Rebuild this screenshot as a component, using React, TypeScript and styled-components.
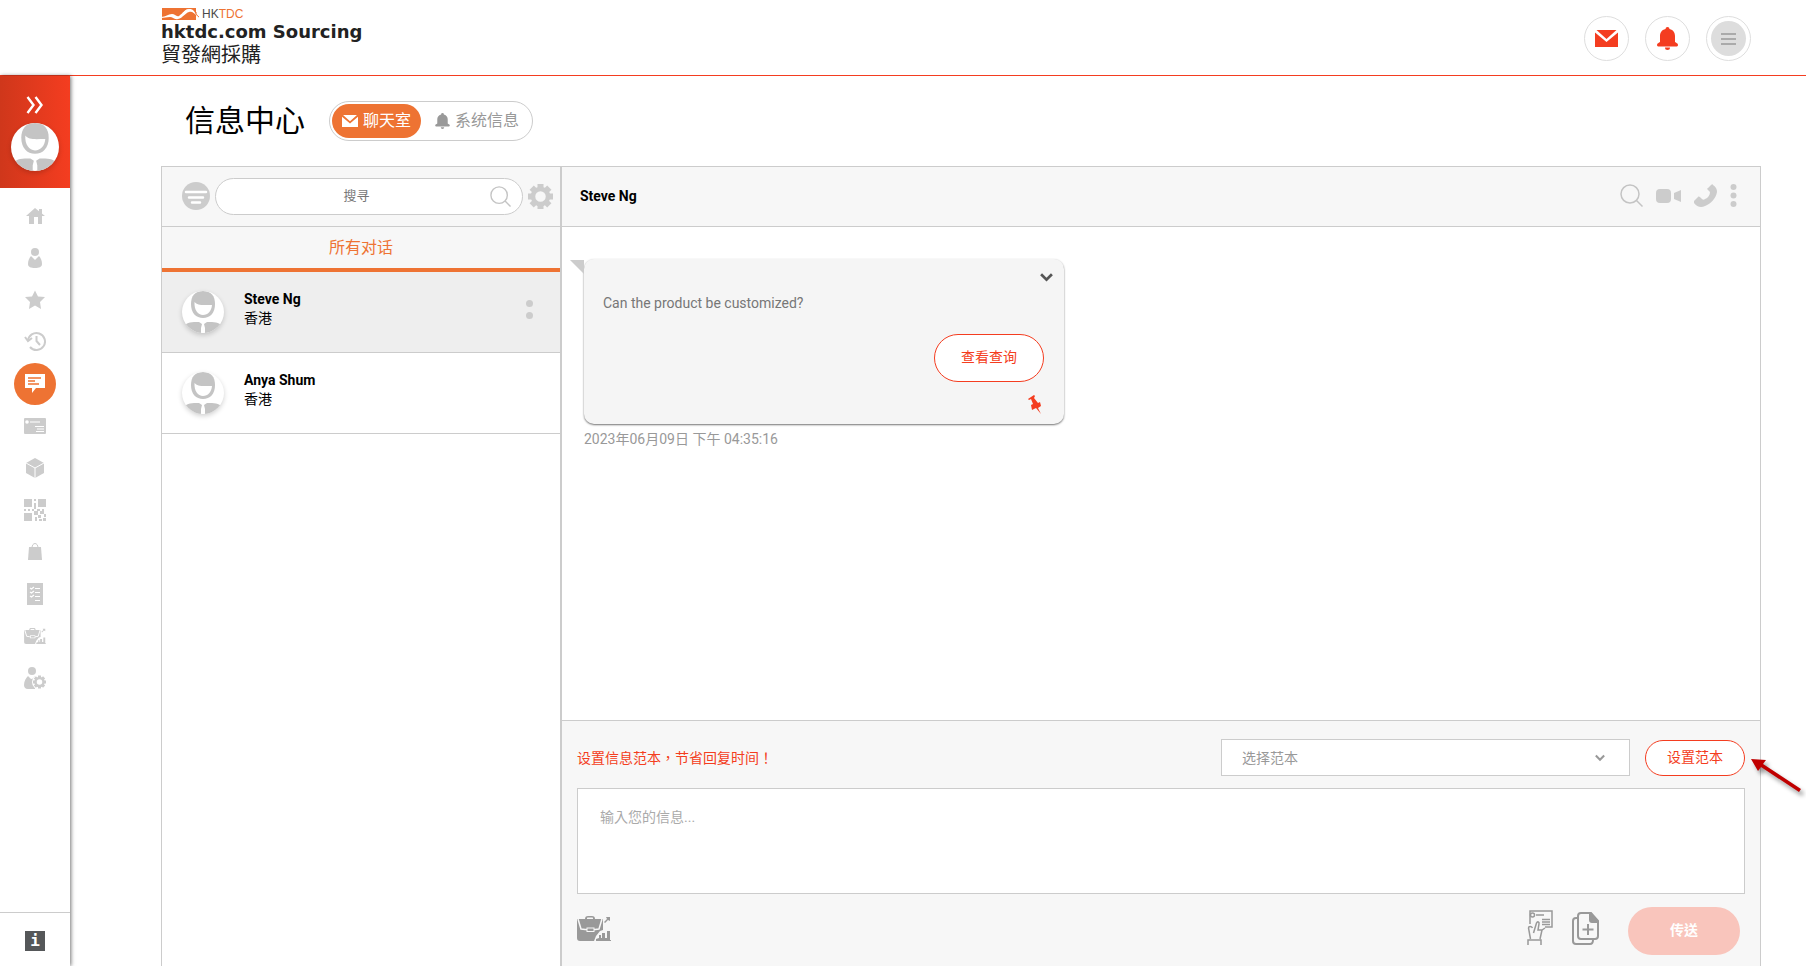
import React from 'react';
import styled, { createGlobalStyle } from 'styled-components';

const color = {
  brand: '#f43d20',
  orange: '#ee7333',
  line: '#cccccc',
  icon: '#cccccc',
  muted: '#999999',
  surface: '#f7f7f7',
};

const GlobalStyle = createGlobalStyle`
  *, *::before, *::after { box-sizing: border-box; }
  body {
    margin: 0;
    background: #fff;
    color: #000;
    font-family: Roboto, "Noto Sans CJK TC", sans-serif;
    font-size: 14px;
    line-height: 20px;
  }
  button, input, select, textarea { font: inherit; }
  svg { display: block; flex: none; }
`;

const Page = styled.div`
  display: flex;
  flex-direction: column;
  min-height: 100vh;
`;

/* ---------- header ---------- */

const Header = styled.header`
  display: flex;
  justify-content: space-between;
  align-items: center;
  height: 76px;
  padding: 0 55px 0 161px;
  border-bottom: 1px solid ${color.brand};
`;

const Brand = styled.a`
  display: flex;
  flex-direction: column;
  margin-bottom: 4px;
  color: #222;
  text-decoration: none;
`;

const BrandMark = styled.span`
  display: flex;
  align-items: center;
  gap: 3px;
  height: 14px;
  color: #4a4a4a;
  font: 12px/14px "Liberation Sans", sans-serif;
`;

const BrandAccent = styled.span`
  color: ${color.orange};
`;

const BrandName = styled.span`
  font: bold 18px/22px "DejaVu Sans", sans-serif;
`;

const BrandLocal = styled.span`
  font: 20px/22px "Noto Sans CJK TC", sans-serif;
`;

const HeaderActions = styled.div`
  display: flex;
  gap: 16px;
  margin-top: 2px;
`;

const RoundButton = styled.button`
  display: flex;
  align-items: center;
  justify-content: center;
  width: 45px;
  height: 45px;
  padding: 0;
  border: 1px solid #dedede;
  border-radius: 50%;
  background: #fff;
  color: ${color.brand};
`;

const MenuDisc = styled.span`
  display: flex;
  align-items: center;
  justify-content: center;
  width: 35px;
  height: 35px;
  border-radius: 50%;
  background: #dddddd;
`;

/* ---------- sidebar ---------- */

const Body = styled.div`
  display: flex;
  flex: 1;
`;

const Sidebar = styled.aside`
  display: flex;
  flex-direction: column;
  flex: none;
  width: 70px;
  background: #fff;
  box-shadow: 1px 0 4px rgba(0, 0, 0, 0.55);
`;

const Profile = styled.div`
  display: flex;
  flex-direction: column;
  align-items: center;
  gap: 9px;
  height: 112px;
  padding-top: 20px;
  background: linear-gradient(90deg, #cf371b, #f43d20);
`;

const PlainButton = styled.button`
  display: flex;
  align-items: center;
  justify-content: center;
  padding: 0;
  border: 0;
  background: none;
  color: inherit;
`;

const SideNav = styled.nav`
  display: flex;
  flex-direction: column;
  align-items: center;
  flex: 1;
  padding-top: 7px;
`;

const SideLink = styled.a<{ $active?: boolean }>`
  display: flex;
  align-items: center;
  justify-content: center;
  width: 42px;
  height: 42px;
  border-radius: 50%;
  color: ${(p) => (p.$active ? '#fff' : color.icon)};
  background: ${(p) => (p.$active ? color.orange : 'none')};
`;

const SideFooter = styled.div`
  display: flex;
  justify-content: center;
  height: 54px;
  padding-top: 18px;
  border-top: 1px solid ${color.line};
`;

const InfoLink = styled.a`
  width: 20px;
  height: 20px;
  background: #555759;
  color: #fff;
  text-align: center;
  text-decoration: none;
  font: bold 16px/20px "DejaVu Sans Mono", monospace;
`;

/* ---------- main ---------- */

const Main = styled.main`
  display: flex;
  flex-direction: column;
  flex: 1;
  min-width: 0;
  padding: 25px 45px 0 91px;
`;

const TitleBar = styled.div`
  display: flex;
  align-items: center;
  gap: 24px;
  height: 40px;
  margin-bottom: 25px;
  padding-left: 24px;
`;

const Title = styled.h1`
  margin: 0;
  font-size: 30px;
  line-height: 40px;
  font-weight: 400;
`;

const Switcher = styled.div`
  display: flex;
  align-items: center;
  gap: 14px;
  height: 40px;
  padding: 0 13px 0 2px;
  border: 1px solid ${color.line};
  border-radius: 20px;
`;

const SwitchButton = styled.button<{ $active?: boolean }>`
  display: flex;
  align-items: center;
  gap: 5px;
  height: 34px;
  padding: 0 ${(p) => (p.$active ? '10px' : '0')};
  border: 0;
  border-radius: 17px;
  background: ${(p) => (p.$active ? color.orange : 'none')};
  color: ${(p) => (p.$active ? '#fff' : color.muted)};
  font-size: 16px;
  line-height: 24px;
  white-space: nowrap;
`;

const Messenger = styled.section`
  display: flex;
  flex: 1;
  border: 1px solid ${color.line};
  border-bottom: 0;
`;

const Contacts = styled.div`
  display: flex;
  flex-direction: column;
  flex: none;
  width: 400px;
  border-right: 2px solid ${color.line};
`;

const SearchBar = styled.div`
  display: flex;
  align-items: center;
  gap: 5px;
  height: 60px;
  padding: 0 7px 1px 20px;
  border-bottom: 1px solid ${color.line};
  background: ${color.surface};
`;

const SearchField = styled.label`
  display: flex;
  align-items: center;
  flex: 1;
  min-width: 0;
  height: 37px;
  padding: 0 11px 0 20px;
  border: 1px solid ${color.line};
  border-radius: 19px;
  background: #fff;
`;

const SearchInput = styled.input`
  flex: 1;
  min-width: 0;
  border: 0;
  outline: 0;
  background: none;
  text-align: center;
  font-size: 13px;
  &::placeholder { color: #777; opacity: 1; }
`;

const ContactsTab = styled.button`
  height: 45px;
  padding: 0;
  border: 0;
  border-bottom: 4px solid ${color.orange};
  background: ${color.surface};
  color: ${color.orange};
  font-size: 16px;
`;

const ContactList = styled.ul`
  margin: 0;
  padding: 0;
  list-style: none;
`;

const Contact = styled.li<{ $active?: boolean }>`
  display: flex;
  align-items: center;
  gap: 20px;
  height: 81px;
  padding: 0 27px 0 20px;
  border-bottom: 1px solid ${color.line};
  background: ${(p) => (p.$active ? '#eeeeee' : '#fff')};
`;

const ContactMenu = styled(PlainButton)`
  padding-bottom: 5px;
`;

const AvatarDisc = styled.span<{ $size: number }>`
  display: block;
  flex: none;
  width: ${(p) => p.$size}px;
  height: ${(p) => p.$size}px;
  overflow: hidden;
  border-radius: 50%;
  background: #fff;
  box-shadow: 0 2px 5px rgba(0, 0, 0, 0.18);
`;

const ContactText = styled.div`
  flex: 1;
  padding-bottom: 6px;
  line-height: 19px;
`;

const Name = styled.strong`
  display: block;
  font-weight: 700;
`;

/* ---------- conversation ---------- */

const Conversation = styled.div`
  display: flex;
  flex-direction: column;
  flex: 1;
  min-width: 0;
`;

const ChatHeader = styled.div`
  display: flex;
  align-items: center;
  justify-content: space-between;
  height: 60px;
  padding: 0 23px 2px 18px;
  border-bottom: 1px solid ${color.line};
  background: ${color.surface};
`;

const ChatTools = styled.div`
  display: flex;
  align-items: center;
  gap: 13px;
  color: ${color.icon};
`;

const Thread = styled.div`
  flex: 1;
  padding: 32px 22px;
`;

const Bubble = styled.article`
  position: relative;
  display: flex;
  flex-direction: column;
  width: 480px;
  max-width: 100%;
  height: 165px;
  padding: 12px 11px 12px 19px;
  border-radius: 10px;
  background: #f5f5f5;
  box-shadow: 0 1px 2px rgba(0, 0, 0, 0.55);
  color: #777;

  &::before {
    content: "";
    position: absolute;
    top: 1px;
    left: -14px;
    border-top: 14px solid ${color.line};
    border-left: 14px solid transparent;
  }
`;

const BubbleRow = styled.div`
  display: flex;
  justify-content: flex-end;
`;

const BubbleText = styled.p`
  margin: 9px 0 21px;
`;

const BubbleFooter = styled.div`
  display: flex;
  flex-direction: column;
  align-items: flex-end;
  gap: 13px;
  padding-right: 9px;
`;

const PinnedMark = styled.span`
  padding-right: 2px;
`;

const Time = styled.time`
  display: block;
  margin-top: 5px;
  color: ${color.muted};
`;

const OutlineButton = styled.button<{ $tall?: boolean }>`
  flex: none;
  width: ${(p) => (p.$tall ? 110 : 100)}px;
  height: ${(p) => (p.$tall ? 48 : 36)}px;
  padding: 0 0 2px;
  border: 1px solid ${color.brand};
  border-radius: 24px;
  background: #fff;
  color: ${color.brand};
`;

const Composer = styled.form`
  display: flex;
  flex-direction: column;
  padding: 18px 15px 11px 15px;
  border-top: 1px solid ${color.line};
  background: ${color.surface};
`;

const TemplateRow = styled.div`
  display: flex;
  align-items: center;
  gap: 15px;
  margin-bottom: 12px;
`;

const TemplateHint = styled.p`
  flex: 1;
  margin: 0;
  color: ${color.brand};
`;

const SelectWrap = styled.div`
  display: grid;
  align-items: center;
  width: 409px;
  & > * { grid-area: 1 / 1; }
  & > svg { justify-self: end; margin-right: 25px; pointer-events: none; }
`;

const TemplateSelect = styled.select`
  width: 100%;
  height: 37px;
  padding: 0 20px;
  border: 1px solid ${color.line};
  border-radius: 0;
  background: #fff;
  color: ${color.muted};
  appearance: none;
`;

const MessageInput = styled.textarea`
  display: block;
  width: 100%;
  height: 106px;
  padding: 18px 22px;
  border: 1px solid ${color.line};
  border-radius: 0;
  outline: 0;
  resize: none;
  &::placeholder { color: #aaa; opacity: 1; }
`;

const ComposerActions = styled.div`
  display: flex;
  align-items: center;
  justify-content: space-between;
  margin-top: 13px;
  padding-right: 5px;
  color: ${color.muted};
`;

const ActionGroup = styled.div`
  display: flex;
  align-items: center;
  gap: 18px;
`;

const ToolButton = styled(PlainButton)`
  padding-bottom: 6px;
`;

const SendButton = styled.button`
  width: 112px;
  height: 48px;
  margin-left: 11px;
  padding: 0 0 2px;
  border: 0;
  border-radius: 24px;
  background: #f9c5bc;
  color: #fff;
  font-weight: 700;
`;

const Pointer = styled.svg`
  position: absolute;
  top: 752px;
  right: 0;
  filter: drop-shadow(3px 4px 2px rgba(0, 0, 0, 0.4));
`;

/* ---------- drawings ---------- */

const LogoWave = () => (
  <svg width="38" height="12" viewBox="0 0 38 12">
    <path d="M1 0h34v12H1z" fill={color.orange} />
    <path d="M0 9c5 0 7-3 11-3 3 0 4 3 7 2C22 5 24 1 29 1c4 0 5 4 7 7-3-3-5-5-8-4-4 1-6 6-11 7-4 1-5-2-8-2-4 0-5 1-9 1z" fill="#fff" />
    <path d="M22 5c3-4 6-4 8-3" fill="none" stroke="#fff" />
    <path d="M35 4c0 2 1 4 3 5" fill="none" stroke={color.orange} />
  </svg>
);

const Chevrons = () => (
  <svg width="18" height="18" viewBox="0 0 18 18" fill="none" stroke="#fff" strokeWidth="2.4">
    <path d="M1.500 1l6 8-6 8M9.500 1l6 8-6 8" />
  </svg>
);

const Avatar = ({ size }: { size: number }) => (
  <AvatarDisc $size={size}>
    <svg width={size} height={size} viewBox="0 0 42 42" fill="#c4c4c4">
      <path d="M21 0c8 0 12 5 12 13 0 9-5 14-12 14S9 22 9 13C9 5 13 0 21 0z" />
      <path d="M12.500 11c3 4 9 3 17.500 3-.5 6-4 10-9 10s-9-5-8.500-13z" fill="#fff" />
      <path d="M2 35c3-4 8-4 15-4l3 2-1 4 0 5H6zM40 35c-3-4-8-4-15-4l-3 2 1 4 0 5h13z" />
    </svg>
  </AvatarDisc>
);

const Mail = ({ w, h }: { w: number; h: number }) => (
  <svg width={w} height={h} viewBox="0 0 23 17" preserveAspectRatio="none" fill="currentColor">
    <path d="M0 2.500l11.500 9.500L23 2.500V17H0zM1.500 0h20l-10 9z" />
  </svg>
);

const Bell = ({ w, h }: { w: number; h: number }) => (
  <svg width={w} height={h} viewBox="0 0 21 23" fill="currentColor">
    <path d="M10.500 0a2 2 0 0 1 2 2c4 1 5.500 4 5.500 7v6c1 1 3 1 3 3 0 1-1 1.500-2 1.500H2c-1 0-2-.5-2-1.500 0-2 2-2 3-3V9c0-3 1.500-6 5.500-7a2 2 0 0 1 2-2zM8 20.500h5a2.500 2.500 0 0 1-5 0z" />
  </svg>
);

const MenuLines = () => (
  <svg width="15" height="12" viewBox="0 0 15 12" fill="#aaa">
    <path d="M0 0h15v2H0zM0 5h15v2H0zM0 10h15v2H0z" />
  </svg>
);

const Search = ({ size }: { size: number }) => (
  <svg width={size} height={size} viewBox="0 0 23 23" fill="none" stroke="#c4c4c4" strokeWidth="1.500">
    <circle cx="10" cy="10" r="9" />
    <path d="M16.500 16.500l6 6" />
  </svg>
);

const Filter = () => (
  <svg width="28" height="28" viewBox="0 0 28 28">
    <circle cx="14" cy="14" r="14" fill={color.icon} />
    <path d="M4 10h20M7 15.500h14M10 20.500h8" stroke="#fff" strokeWidth="2.500" strokeLinecap="round" />
  </svg>
);

const gearTeeth = [0, 45, 90, 135, 180, 225, 270, 315];

const Gear = () => (
  <svg width="25" height="25" viewBox="0 0 25 25">
    <circle cx="12.500" cy="12.500" r="7.500" fill="none" stroke={color.icon} strokeWidth="4.500" />
    {gearTeeth.map((a) => (
      <rect key={a} x="9.500" y="0" width="6" height="5" fill={color.icon} transform={`rotate(${a} 12.5 12.5)`} />
    ))}
  </svg>
);

const Dots = ({ count }: { count: number }) => {
  const pitch = count === 2 ? 12 : 8.500;
  const r = count === 2 ? 3.500 : 3;
  const h = pitch * (count - 1) + r * 2;
  return (
    <svg width="7" height={Math.ceil(h)} viewBox={`0 0 7 ${h}`} fill={color.icon}>
      {Array.from({ length: count }, (_, i) => (
        <circle key={i} cx="3.500" cy={r + i * pitch} r={r} />
      ))}
    </svg>
  );
};

const Video = () => (
  <svg width="25" height="14" viewBox="0 0 25 14" fill="currentColor">
    <rect width="15" height="14" rx="4" />
    <path d="M18 4l7-3v12l-7-3z" />
  </svg>
);

const Phone = () => (
  <svg width="23" height="23" viewBox="0 0 23 23" fill="currentColor">
    <path d="M17 1c1-1 2-1 2 0 3 2 4 4 4 7-1 6-6 12-12 14-4 2-8 1-11-3v-2l4-4c1-1 2 0 4 2 1 1 2 1 3 0 3-1 5-4 5-7l-2-2c-1-1-1-2 0-2z" />
  </svg>
);

const Down = ({ w, tint, weight }: { w: number; tint: string; weight: number }) => (
  <svg width={w} height={w} viewBox="0 0 12 12" fill="none" stroke={tint} strokeWidth={weight}>
    <path d="M1 3l5 5 5-5" />
  </svg>
);

const Pin = () => (
  <svg width="14" height="19" viewBox="0 0 14 19" fill={color.brand}>
    <path d="M0 4l6-4 1 1-1 2 4 5 2-1 1 4-3 2 3 6-5-6-4 2-1-5 2-1-2-5-2 1z" />
  </svg>
);

const Case = ({ w, h, gap }: { w: number; h: number; gap: string }) => (
  <svg width={w} height={h} viewBox="0 0 34 25" fill="currentColor">
    <path d="M8 3c0-2 1-3 3-3h4c2 0 3 1 3 3h8v22H3c-2 0-3-1-3-3V3zm2 0h6c0-1 0-1.500-1-1.500h-4c-1 0-1 .5-1 1.500z" />
    <path d="M1 3l3 10c5 1 14 1 18 0l3-10" fill="none" stroke={gap} strokeWidth="1.500" />
    <rect x="10" y="12" width="7" height="3.500" stroke={gap} />
    <path d="M17 25l2-5 4-5 3-1V3h8v22z" fill={gap} />
    <path d="M19 25v-2l3-1v-3h2v3h1v-5h3v5h2v-7h3v9h1v1zM27 6l3-3-1-2h4v4l-2-1-3 3z" />
  </svg>
);

const CardInHand = () => (
  <svg width="27" height="36" viewBox="0 0 27 36" fill="none" stroke="currentColor" strokeWidth="1.500">
    <path d="M3 14V1h22v16h-7M9 5h8M15 9.500h8M15 12h8M15 14.500h8" />
    <circle cx="5.500" cy="5" r="2" />
    <path d="M1 35v-5h13v5M3.500 29L1.500 18c0-2 3-2 4 0M6.500 23l3-10c1-2 3-1 2.500 1l-1 6 4 0 3-2M15 20l-2 9" />
  </svg>
);

const CopyAdd = () => (
  <svg width="27" height="33" viewBox="0 0 27 33" fill="none" stroke="currentColor" strokeWidth="2">
    <path d="M9 1h10l7 8v15c0 2-1 3-3 3H9c-2 0-3-1-3-3V4c0-2 1-3 3-3z" />
    <path d="M6 6H4C2 6 1 7 1 9v20c0 2 1 3 3 3h14c2 0 3-1 3-4M16 12v11M10.500 17.500h11" />
    <path d="M18 1l8 9h-6c-1 0-2-1-2-2z" fill="currentColor" />
  </svg>
);

const glyph = (children: React.ReactNode, w = 22, h = 22) => (
  <svg width={w} height={h} viewBox={`0 0 ${w} ${h}`} fill="currentColor">{children}</svg>
);

const sideItems = [
  { label: '主页', icon: glyph(<path d="M11 3l10 8h-3v8h-4v-7h-4v7H5v-8H2zM15 4h3v5l-3-2z" />) },
  {
    label: '用户',
    icon: glyph(<><circle cx="11" cy="5" r="4" /><path d="M7 9l4 4 4-4c2 2 3 5 3 8s-3 4-7 4-7-1-7-4 1-6 3-8z" /></>),
  },
  { label: '收藏', icon: glyph(<path d="M11 1.500l3 6 7 .5-5 5 1 7-6-3.500-6 3.500 1-7-5-5 7-.5z" />) },
  {
    label: '历史',
    icon: glyph(
      <g fill="none" stroke="currentColor" strokeWidth="2">
        <path d="M4 10a8.500 8.500 0 1 1 2 6M12.500 5v5l3.500 4" /><path d="M1 6l3 4 4-3" />
      </g>,
    ),
  },
  {
    label: '聊天',
    active: true,
    icon: glyph(
      <><path d="M1 1h20v14h-9l-4 5v-5H1z" /><path d="M4 5h13M4 8h7M4 11h11" stroke={color.orange} strokeWidth="1.300" /></>,
    ),
  },
  {
    label: '名片',
    icon: glyph(
      <><rect y="3" width="22" height="16" rx="1" /><circle cx="3" cy="7" r="1.800" fill="#fff" />
        <path d="M6 7h10M11 11.500h9M13 14h7M12 16.500h8" stroke="#fff" strokeWidth="1.200" /></>,
    ),
  },
  {
    label: '产品',
    icon: glyph(<><path d="M11 1l9 5v10l-9 5-9-5V6z" /><path d="M2 6l9 5 9-5M11 11v10" fill="none" stroke="#fff" /></>),
  },
  {
    label: '二维码',
    icon: glyph(
      <path d="M0 0h8v8H0zM14 0h8v8h-8zM0 14h8v8H0zM10 0h2v2h-2zM10 4h2v6h-2zM0 10h2v2H0zM4 10h2v2H4zM8 10h2v2H8zM13 10h3v2h-3zM18 10h2v2h-2zM10 12h4v4h-4zM16 12h4v3h-4zM20 15h2v3h-2zM14 16h3v3h-3zM11 18h2v4h-2zM15 20h3v2h-3zM19 19h3v3h-3z" />,
    ),
  },
  {
    label: '订单',
    icon: glyph(<><path d="M5 6h12l1 13H4z" /><path d="M8 7c0-6 6-6 6 0" fill="none" stroke="currentColor" /></>),
  },
  {
    label: '清单',
    icon: glyph(
      <><path d="M3 0h16v22H3z" /><path d="M6 5l1.500 1L10 4M6 9l1.500 1L10 8M6 13l1.500 1 2.500-2M11 5.500h5M11 9.500h5M11 13.500h5M11 17.500h5" fill="none" stroke="#fff" strokeWidth="1.200" /></>,
    ),
  },
  { label: '商务', icon: <Case w={22} h={16} gap="#fff" /> },
  {
    label: '账户设定',
    icon: glyph(
      <><circle cx="8" cy="4" r="4" /><path d="M4 9l3 3c2 0 3-2 4-3v13H4c-3 0-4-2-4-4 0-4 2-7 4-9z" />
        <circle cx="15.500" cy="15" r="7.500" fill="#fff" />
        <circle cx="15.500" cy="15" r="4" fill="none" stroke="currentColor" strokeWidth="2.500" />
        {gearTeeth.map((a) => <rect key={a} x="14" y="8.500" width="3" height="2.500" transform={`rotate(${a} 15.5 15)`} />)}</>,
    ),
  },
];

const contacts = [
  { name: 'Steve Ng', place: '香港', active: true },
  { name: 'Anya Shum', place: '香港' },
];

export default function App() {
  return (
    <Page>
      <GlobalStyle />
      <Header>
        <Brand href="#home">
          <BrandMark>
            <LogoWave />
            <span>HK<BrandAccent>TDC</BrandAccent></span>
          </BrandMark>
          <BrandName>hktdc.com Sourcing</BrandName>
          <BrandLocal>貿發網採購</BrandLocal>
        </Brand>
        <HeaderActions>
          <RoundButton aria-label="邮件"><Mail w={23} h={17} /></RoundButton>
          <RoundButton aria-label="通知"><Bell w={21} h={23} /></RoundButton>
          <RoundButton aria-label="菜单"><MenuDisc><MenuLines /></MenuDisc></RoundButton>
        </HeaderActions>
      </Header>

      <Body>
        <Sidebar>
          <Profile>
            <PlainButton aria-label="展开"><Chevrons /></PlainButton>
            <Avatar size={48} />
          </Profile>
          <SideNav>
            {sideItems.map((item) => (
              <SideLink key={item.label} href="#" aria-label={item.label} $active={item.active}>
                {item.icon}
              </SideLink>
            ))}
          </SideNav>
          <SideFooter><InfoLink href="#info">i</InfoLink></SideFooter>
        </Sidebar>

        <Main>
          <TitleBar>
            <Title>信息中心</Title>
            <Switcher>
              <SwitchButton $active><Mail w={16} h={12} />聊天室</SwitchButton>
              <SwitchButton><Bell w={15} h={16} />系统信息</SwitchButton>
            </Switcher>
          </TitleBar>

          <Messenger>
            <Contacts>
              <SearchBar>
                <PlainButton aria-label="筛选"><Filter /></PlainButton>
                <SearchField>
                  <SearchInput type="search" aria-label="搜寻" placeholder="搜寻" />
                  <Search size={21} />
                </SearchField>
                <PlainButton aria-label="设定"><Gear /></PlainButton>
              </SearchBar>
              <ContactsTab>所有对话</ContactsTab>
              <ContactList>
                {contacts.map((c) => (
                  <Contact key={c.name} $active={c.active}>
                    <Avatar size={42} />
                    <ContactText><Name>{c.name}</Name>{c.place}</ContactText>
                    {c.active && <ContactMenu aria-label="更多"><Dots count={2} /></ContactMenu>}
                  </Contact>
                ))}
              </ContactList>
            </Contacts>

            <Conversation>
              <ChatHeader>
                <Name>Steve Ng</Name>
                <ChatTools>
                  <PlainButton aria-label="搜寻对话"><Search size={23} /></PlainButton>
                  <PlainButton aria-label="视频通话"><Video /></PlainButton>
                  <PlainButton aria-label="语音通话"><Phone /></PlainButton>
                  <PlainButton aria-label="更多选项"><Dots count={3} /></PlainButton>
                </ChatTools>
              </ChatHeader>

              <Thread>
                <Bubble>
                  <BubbleRow>
                    <PlainButton aria-label="收起"><Down w={13} tint="#555" weight={2.5} /></PlainButton>
                  </BubbleRow>
                  <BubbleText>Can the product be customized?</BubbleText>
                  <BubbleFooter>
                    <OutlineButton $tall>查看查询</OutlineButton>
                    <PinnedMark><Pin /></PinnedMark>
                  </BubbleFooter>
                </Bubble>
                <Time dateTime="2023-06-09T16:35:16">2023年06月09日 下午 04:35:16</Time>
              </Thread>

              <Composer onSubmit={(e) => e.preventDefault()}>
                <TemplateRow>
                  <TemplateHint>设置信息范本，节省回复时间！</TemplateHint>
                  <SelectWrap>
                    <TemplateSelect aria-label="选择范本"><option>选择范本</option></TemplateSelect>
                    <Down w={10} tint="#999" weight={2.5} />
                  </SelectWrap>
                  <OutlineButton type="button">设置范本</OutlineButton>
                </TemplateRow>
                <MessageInput aria-label="信息" placeholder="输入您的信息..." />
                <ComposerActions>
                  <ToolButton type="button" aria-label="商务资料"><Case w={34} h={25} gap={color.surface} /></ToolButton>
                  <ActionGroup>
                    <ToolButton type="button" aria-label="发送名片"><CardInHand /></ToolButton>
                    <ToolButton type="button" aria-label="添加文件"><CopyAdd /></ToolButton>
                    <SendButton type="submit">传送</SendButton>
                  </ActionGroup>
                </ComposerActions>
              </Composer>
            </Conversation>
          </Messenger>
        </Main>
      </Body>

      <Pointer width="60" height="52" viewBox="0 0 60 52" aria-hidden="true">
        <path d="M5 7l15 1-3 4 38 25-2 3-38-25-3 4z" fill="#c00000" />
      </Pointer>
    </Page>
  );
}
